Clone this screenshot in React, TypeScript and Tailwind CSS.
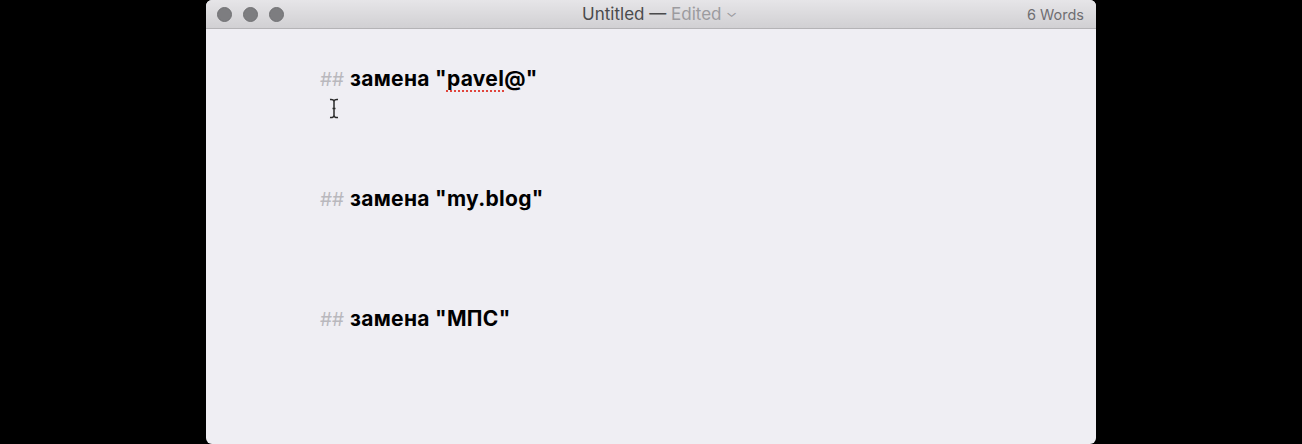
import React from "react";

const headings = ['"pavel@"', '"my.blog"', '"МПС"'];

function Heading({ word, spell }: { word: string; spell?: boolean }) {
  return (
    <div className="flex items-baseline h-[120px] pt-[36px] leading-[28px]">
      <span className="text-[19px] text-[#b9b8bd] mr-[6px] font-['Inter',sans-serif]">##</span>
      <span className="text-[21px] font-bold text-black tracking-[0.3px] font-['Inter',sans-serif]">
        замена{" "}
        {spell ? (
          <>
            "
            <span className="underline decoration-dotted decoration-[#e0443c] decoration-2 underline-offset-[4px]">
              pavel
            </span>
            @"
          </>
        ) : (
          word
        )}
      </span>
    </div>
  );
}

export default function App() {
  return (
    <div className="w-[1302px] h-[444px] bg-black flex justify-center overflow-hidden">
      <div className="w-[890px] h-[444px] rounded-t-[6px] rounded-b-[6px] overflow-hidden bg-[#efeef3] flex flex-col">
        {/* title bar */}
        <div className="h-[29px] shrink-0 flex items-center relative bg-gradient-to-b from-[#e6e5e8] to-[#d1d0d3] border-b border-[#b4b3b6] font-['Inter',sans-serif]">
          <div className="flex gap-[11px] pl-[11px]">
            <div className="w-[15px] h-[15px] rounded-full bg-[#7d7d80] border border-[#727275]" />
            <div className="w-[15px] h-[15px] rounded-full bg-[#7d7d80] border border-[#727275]" />
            <div className="w-[15px] h-[15px] rounded-full bg-[#7d7d80] border border-[#727275]" />
          </div>
          <div className="absolute left-0 right-0 top-[2px] flex justify-center pointer-events-none">
            <span className="text-[17px] text-[#4a4a4c] ml-[16px]">
              Untitled — <span className="text-[#9c9b9f]">Edited</span>
              <span className="text-[#9c9b9f] text-[12px] ml-[5px] inline-block scale-x-125 -translate-y-[3px]">⌄</span>
            </span>
          </div>
          <div className="ml-auto pr-[12px] pt-[2px] text-[14.5px] text-[#6f6e72]">6 Words</div>
        </div>
        {/* editor */}
        <div className="relative flex-1 pl-[114px]">
          <Heading word='"pavel@"' spell />
          <Heading word={headings[1]} />
          <Heading word={headings[2]} />
          <svg
            className="absolute left-[123px] top-[69px]"
            width="10"
            height="21"
            viewBox="0 0 10 21"
          >
            <path
              d="M1 1.5 Q5 1 5 4 V17 Q5 20 1 19.5 M9 1.5 Q5 1 5 4 M9 19.5 Q5 20 5 17 M3.5 10.5 H6.5"
              fill="none"
              stroke="#2a2a2a"
              strokeWidth="1.5"
            />
          </svg>
        </div>
      </div>
    </div>
  );
}
